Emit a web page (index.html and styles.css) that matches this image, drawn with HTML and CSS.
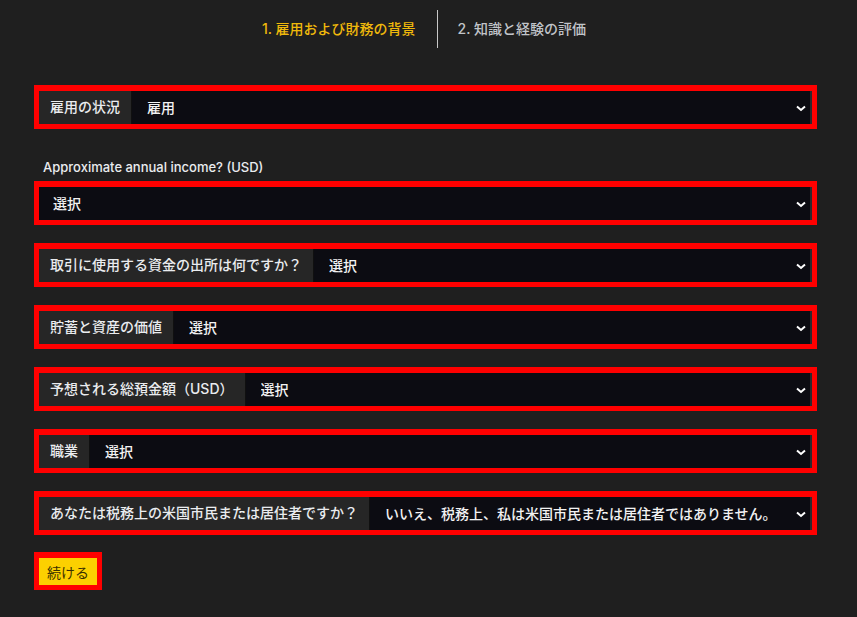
FILE: index.html
```
<!DOCTYPE html>
<html lang="ja">
<head>
<meta charset="utf-8">
<title>雇用および財務の背景</title>
<link rel="stylesheet" href="styles.css">
</head>
<body>
<div class="steps">
	<div class="step active">1. 雇用および財務の背景</div>
	<div class="step-sep"></div>
	<div class="step">2. 知識と経験の評価</div>
</div>

<form class="form">
	<div class="row">
		<span class="label">雇用の状況</span>
		<div class="select-box">
			<select><option>雇用</option></select>
			<svg class="chev" width="10" height="7" viewBox="0 0 10 7"><path d="M1 1.5l4 3.5 4-3.5" fill="none" stroke="#fff" stroke-width="2"/></svg>
		</div>
	</div>

	<div class="group">
		<p class="title">Approximate annual income? (USD)</p>
		<div class="row">
			<div class="select-box wide">
				<select><option>選択</option></select>
				<svg class="chev" width="10" height="7" viewBox="0 0 10 7"><path d="M1 1.5l4 3.5 4-3.5" fill="none" stroke="#fff" stroke-width="2"/></svg>
			</div>
		</div>
	</div>

	<div class="row">
		<span class="label">取引に使用する資金の出所は何ですか？</span>
		<div class="select-box">
			<select><option>選択</option></select>
			<svg class="chev" width="10" height="7" viewBox="0 0 10 7"><path d="M1 1.5l4 3.5 4-3.5" fill="none" stroke="#fff" stroke-width="2"/></svg>
		</div>
	</div>

	<div class="row">
		<span class="label">貯蓄と資産の価値</span>
		<div class="select-box">
			<select><option>選択</option></select>
			<svg class="chev" width="10" height="7" viewBox="0 0 10 7"><path d="M1 1.5l4 3.5 4-3.5" fill="none" stroke="#fff" stroke-width="2"/></svg>
		</div>
	</div>

	<div class="row">
		<span class="label">予想される総預金額（USD）</span>
		<div class="select-box">
			<select><option>選択</option></select>
			<svg class="chev" width="10" height="7" viewBox="0 0 10 7"><path d="M1 1.5l4 3.5 4-3.5" fill="none" stroke="#fff" stroke-width="2"/></svg>
		</div>
	</div>

	<div class="row">
		<span class="label">職業</span>
		<div class="select-box">
			<select><option>選択</option></select>
			<svg class="chev" width="10" height="7" viewBox="0 0 10 7"><path d="M1 1.5l4 3.5 4-3.5" fill="none" stroke="#fff" stroke-width="2"/></svg>
		</div>
	</div>

	<div class="row">
		<span class="label">あなたは税務上の米国市民または居住者ですか？</span>
		<div class="select-box">
			<select><option>いいえ、税務上、私は米国市民または居住者ではありません。</option></select>
			<svg class="chev" width="10" height="7" viewBox="0 0 10 7"><path d="M1 1.5l4 3.5 4-3.5" fill="none" stroke="#fff" stroke-width="2"/></svg>
		</div>
	</div>

	<div class="actions">
		<button type="button" class="btn">続ける</button>
	</div>
</form>
</body>
</html>
```

FILE: styles.css
```
*{ margin:0; padding:0; box-sizing:border-box;}
body{ background:#1f1f1f; color:#eaecef; font:14px/1.2 Inter,"Noto Sans CJK JP",sans-serif;}

.steps{ display:flex; justify-content:center; align-items:center; height:58px; padding:10px 0; margin-left:-8px;}
.step{ font-size:14px; font-weight:500; color:#c1c4c9; padding:0 21px 0 20px; line-height:38px;}
.step.active{ color:#f0b90b;}
.step-sep{ width:1px; height:38px; background:#c8c8c8;}

.form{ width:783px; margin:27px 0 0 34px; display:flex; flex-direction:column; gap:18px;}
.group{ display:flex; flex-direction:column; gap:4px; margin-top:10px;}
.title{ font-size:13px; font-weight:500; color:#eaecef; padding-left:9px; line-height:20px;}

.row{ display:flex; height:44px; border:5px solid #ff0000; border-top-width:6px; background:#262626;}
.label{ display:flex; align-items:center; padding:0 11px; white-space:nowrap; background:#262626; color:#eaecef; font-size:14px; font-weight:500;}
.select-box{ flex:1; position:relative; background:#0c0c12; border-left:1px solid #101010; border-right:2px solid #2a2a2e;}
.select-box.wide{ border-left:none;}
.select-box select{ appearance:none; -webkit-appearance:none; width:100%; height:100%; border:none; outline:none; background:transparent; color:#f2f2f2; font:500 14px Inter,"Noto Sans CJK JP",sans-serif; padding:0 30px 0 15px;}
.select-box.wide select{ padding-left:14px;}
.chev{ position:absolute; right:4px; top:50%; margin-top:-3px; pointer-events:none;}

.actions{ display:flex; margin-top:-1px;}
.btn{ border:5px solid #ff0000; border-top-width:6px; background:#fcd000; color:#3a3000; font:14px Inter,"Noto Sans CJK JP",sans-serif; height:38px; padding:0 8px; cursor:pointer;}
```
